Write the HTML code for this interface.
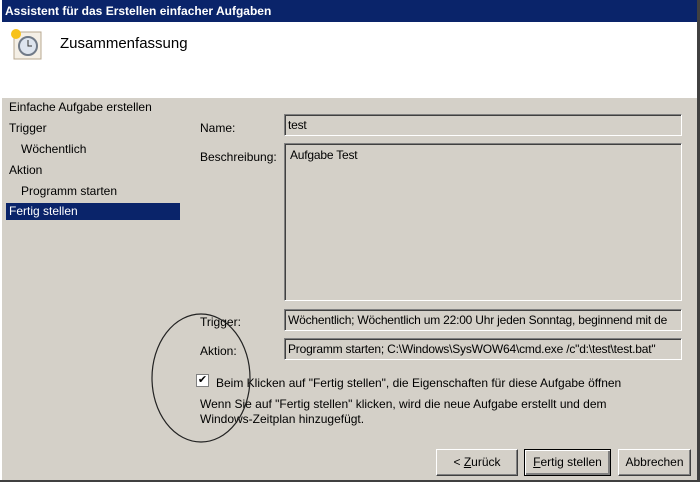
<!DOCTYPE html><html><head><style>
body{margin:0;width:700px;height:482px;overflow:hidden;background:#d4d0c8;font-family:"Liberation Sans",sans-serif;font-size:12px;position:relative;color:#000}
.a{position:absolute;white-space:nowrap}
.box{position:absolute;background:#d4d0c8;border:1px solid #808080;border-right-color:#fff;border-bottom-color:#fff;box-shadow:inset 1px 1px 0 #404040;box-sizing:border-box;padding:3px 3px;letter-spacing:-0.2px;overflow:hidden}
.btn{position:absolute;height:27px;background:#d4d0c8;border:1px solid;border-color:#fff #404040 #404040 #fff;box-shadow:inset -1px -1px 0 #808080;box-sizing:border-box;text-align:center;line-height:25px;font-size:12px}
</style></head><body>
<div class="a" style="left:0;top:0;width:700px;height:22px;background:#0a246a;color:#fff;font-weight:bold;font-size:12px;line-height:22px;padding-left:5px;box-sizing:border-box">Assistent für das Erstellen einfacher Aufgaben</div>
<div class="a" style="left:2px;top:22px;width:695px;height:76px;background:#fff"></div>
<svg class="a" style="left:9px;top:27px" width="34" height="34"><rect x="5" y="5" width="27" height="27" fill="#f4efe6" stroke="#b8a890"/><circle cx="19" cy="19" r="9" fill="#dde4ee" stroke="#707a88" stroke-width="2"/><path d="M19 13v6h4" stroke="#333" fill="none"/><circle cx="7" cy="7" r="5" fill="#f7c21a"/></svg>
<div class="a" style="left:60px;top:35px;font-size:15px">Zusammenfassung</div>
<div class="a" style="left:9px;top:100px">Einfache Aufgabe erstellen</div>
<div class="a" style="left:9px;top:121px">Trigger</div>
<div class="a" style="left:21px;top:142px">Wöchentlich</div>
<div class="a" style="left:9px;top:163px">Aktion</div>
<div class="a" style="left:21px;top:184px">Programm starten</div>
<div class="a" style="left:6px;top:203px;width:174px;height:17px;background:#0a246a;color:#fff;padding-left:3px;box-sizing:border-box;line-height:17px">Fertig stellen</div>
<div class="a" style="left:200px;top:121px">Name:</div>
<div class="box" style="left:284px;top:114px;width:398px;height:22px">test</div>
<div class="a" style="left:200px;top:150px">Beschreibung:</div>
<div class="box" style="left:284px;top:143px;width:398px;height:158px;padding:4px 5px">Aufgabe Test</div>
<div class="a" style="left:200px;top:315px">Trigger:</div>
<div class="box" style="left:284px;top:309px;width:398px;height:22px">Wöchentlich; Wöchentlich um 22:00 Uhr jeden Sonntag, beginnend mit de</div>
<div class="a" style="left:200px;top:344px">Aktion:</div>
<div class="box" style="left:284px;top:338px;width:398px;height:22px">Programm starten; C:\Windows\SysWOW64\cmd.exe /c"d:\test\test.bat"</div>
<div class="a" style="left:196px;top:374px;width:13px;height:13px;background:#fff;border:1px solid #808080;box-sizing:border-box;font-size:11px;line-height:11px;text-align:center">✔</div>
<div class="a" style="left:216px;top:376px">Beim Klicken auf "Fertig stellen", die Eigenschaften für diese Aufgabe öffnen</div>
<div class="a" style="left:200px;top:397px;line-height:15px">Wenn Sie auf "Fertig stellen" klicken, wird die neue Aufgabe erstellt und dem<br>Windows-Zeitplan hinzugefügt.</div>
<svg class="a" style="left:0;top:0" width="700" height="482"><ellipse cx="201" cy="378" rx="49" ry="64" fill="none" stroke="#222" stroke-width="1.2"/></svg>
<div class="btn" style="left:436px;top:449px;width:82px">&lt; <u>Z</u>urück</div>
<div class="btn" style="left:524px;top:449px;width:87px;border:1px solid #000;box-shadow:inset 1px 1px 0 #fff,inset -2px -2px 0 #808080"><u>F</u>ertig stellen</div>
<div class="btn" style="left:618px;top:449px;width:73px">Abbrechen</div>
<div class="a" style="left:0;top:0;width:2px;height:482px;background:#fff"></div>
<div class="a" style="left:697px;top:0;width:3px;height:482px;background:#404040"></div>
<div class="a" style="left:0;top:480px;width:700px;height:2px;background:#404040"></div>
</body></html>
